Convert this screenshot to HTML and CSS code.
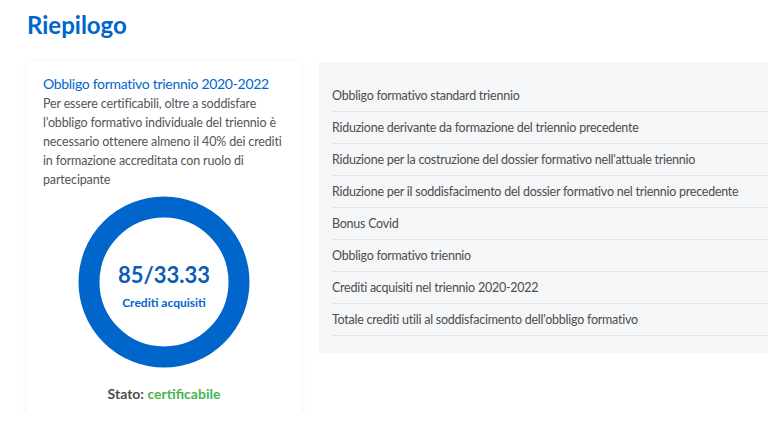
FILE: index.html
```html
<!DOCTYPE html>
<html lang="it">
<head>
<meta charset="UTF-8">
<meta name="viewport" content="width=device-width, initial-scale=1.0">
<title>Riepilogo</title>
<link rel="stylesheet" href="styles.css">
</head>
<body>

<div class="page">
  <h1 class="page-title">Riepilogo</h1>

  <div class="summary">
    <div class="card">
      <h2 class="card-title">Obbligo formativo triennio 2020-2022</h2>
      <p class="card-text">Per essere certificabili, oltre a soddisfare l’obbligo formativo individuale del triennio è necessario ottenere almeno il 40% dei crediti in formazione accreditata con ruolo di partecipante</p>

      <div class="donut">
        <svg width="172" height="172" viewBox="0 0 172 172">
          <circle cx="86" cy="86" r="75" fill="none" stroke="#0066cc" stroke-width="21"/>
        </svg>
        <div class="donut-label">
          <span class="donut-value">85/33.33</span>
          <span class="donut-caption">Crediti acquisiti</span>
        </div>
      </div>

      <div class="status">Stato: <span class="status-ok">certificabile</span></div>
    </div>

    <div class="details">
      <div class="details-row">Obbligo formativo standard triennio</div>
      <div class="details-row">Riduzione derivante da formazione del triennio precedente</div>
      <div class="details-row">Riduzione per la costruzione del dossier formativo nell'attuale triennio</div>
      <div class="details-row">Riduzione per il soddisfacimento del dossier formativo nel triennio precedente</div>
      <div class="details-row">Bonus Covid</div>
      <div class="details-row">Obbligo formativo triennio</div>
      <div class="details-row">Crediti acquisiti nel triennio 2020-2022</div>
      <div class="details-row">Totale crediti utili al soddisfacimento dell'obbligo formativo</div>
    </div>
  </div>
</div>

</body>
</html>
```

FILE: styles.css
```css
body {
  margin: 0;
  background: #fff;
  font-family: Lato, "Open Sans", sans-serif;
  color: #4d4d4d;
  overflow: hidden;
}

.page {
  padding: 0 0 0 27px;
}

.page-title {
  margin: 0;
  padding-top: 10px;
  height: 62px;
  box-sizing: border-box;
  font-size: 24px;
  font-weight: 700;
  color: #0066cc;
  line-height: 30px;
}

.summary {
  display: flex;
  align-items: flex-start;
  gap: 18px;
}

.card {
  width: 274px;
  flex-shrink: 0;
  box-sizing: border-box;
  height: 350px;
  padding: 12px 16px 0 16px;
  background: #fff;
  box-shadow: 0 1px 6px rgba(0, 0, 0, 0.07);
}

.card-title {
  margin: 0;
  font-size: 14px;
  font-weight: 400;
  letter-spacing: -0.3px;
  line-height: 20px;
  color: #0066cc;
  white-space: nowrap;
}

.card-text {
  margin: 0;
  font-size: 12.5px;
  letter-spacing: -0.15px;
  line-height: 19px;
  color: #555;
}

.donut {
  position: relative;
  width: 172px;
  height: 172px;
  margin: 7px auto 0;
}

.donut svg {
  display: block;
}

.donut-label {
  position: absolute;
  inset: 0;
  display: flex;
  flex-direction: column;
  align-items: center;
  justify-content: center;
  padding-top: 6px;
  box-sizing: border-box;
}

.donut-value {
  font-size: 22px;
  font-weight: 700;
  color: #0a5cb8;
  line-height: 28px;
}

.donut-caption {
  margin-top: 6px;
  font-size: 12px;
  font-weight: 700;
  color: #0066cc;
  line-height: 15px;
}

.status {
  margin-top: 17px;
  text-align: center;
  font-size: 14px;
  font-weight: 700;
  color: #4d4d4d;
}

.status-ok {
  color: #46b54f;
}

.details {
  flex: 1;
  background: #f5f6f7;
  padding: 18px 0 17px 13px;
}

.details-row {
  height: 32px;
  line-height: 32px;
  box-sizing: border-box;
  border-bottom: 1px solid #e3e4e6;
  font-size: 12.5px;
  letter-spacing: -0.25px;
  color: #4d4d4d;
  white-space: nowrap;
}
```
